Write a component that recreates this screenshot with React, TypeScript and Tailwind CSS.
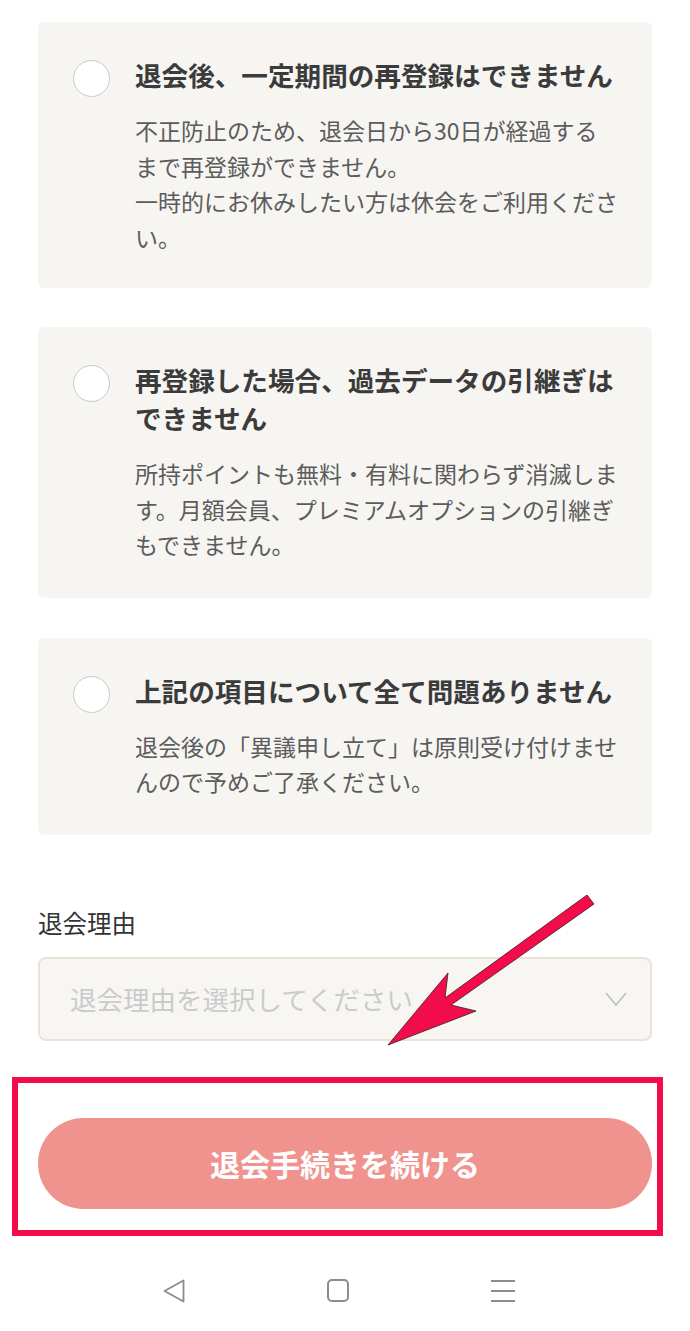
import React from 'react';

const font = { fontFamily: '"Noto Sans CJK JP", "Noto Sans", sans-serif' };

interface NoticeProps {
  title: string;
  body: string[];
  tall?: boolean;
}

const NoticeCard: React.FC<NoticeProps> = ({ title, body, tall }) => (
  <div className={`flex rounded-md bg-[#f6f5f2] pl-[35px] pr-[27px] pt-[34px] ${tall ? 'pb-[35px]' : 'pb-[33px]'}`}>
    <div className="mt-[4px] h-[37px] w-[37px] shrink-0 rounded-full border-[1.5px] border-[#c9c9c9] bg-white" />
    <div className="ml-[25px] flex-1">
      <p className="text-[26.6px] font-bold leading-[38px] text-[#3b3b3b]">{title}</p>
      <p className="mt-[19px] text-[23px] leading-[35.5px] text-[#5c5c5c]">
        {body.map((line, i) => (
          <React.Fragment key={i}>
            {i > 0 && <br />}
            {line}
          </React.Fragment>
        ))}
      </p>
    </div>
  </div>
);

export default function App() {
  return (
    <div className="relative h-[1331px] w-[690px] overflow-hidden bg-white" style={font}>
      <div className="flex flex-col px-[38px] pt-[22px]">
        <NoticeCard
          title="退会後、一定期間の再登録はできません"
          body={[
            '不正防止のため、退会日から30日が経過する',
            'まで再登録ができません。',
            '一時的にお休みしたい方は休会をご利用くださ',
            'い。',
          ]}
        />
        <div className="mt-[39px]">
          <NoticeCard
            tall
            title="再登録した場合、過去データの引継ぎはできません"
            body={[
              '所持ポイントも無料・有料に関わらず消滅しま',
              'す。月額会員、プレミアムオプションの引継ぎ',
              'もできません。',
            ]}
          />
        </div>
        <div className="mt-[40px]">
          <NoticeCard
            tall
            title="上記の項目について全て問題ありません"
            body={['退会後の「異議申し立て」は原則受け付けませ', 'んので予めご了承ください。']}
          />
        </div>

        {/* 退会理由 */}
        <p className="mt-[71px] text-[24.5px] leading-[34px] text-[#333333]">退会理由</p>
        <div className="mt-[17px] flex h-[84px] items-center justify-between rounded-lg border-2 border-[#ebe2d8] bg-[#f7f6f3] pl-[30px] pr-[22px]">
          <span className="text-[26.5px] text-[#cbcbcb]">退会理由を選択してください</span>
          <svg width="24" height="16" viewBox="0 0 24 16" fill="none">
            <path d="M2 2 L12 14 L22 2" stroke="#bdbdbd" strokeWidth="1.6" />
          </svg>
        </div>

        <button className="mt-[77px] flex h-[91px] items-center justify-center rounded-full bg-[#f0938f] text-[30px] font-bold text-white">
          退会手続きを続ける
        </button>
      </div>

      {/* system nav */}
      <div className="ml-[163px] mt-[70px] flex w-[352px] items-center justify-between">
        <svg width="22" height="24" viewBox="0 0 22 24" fill="none">
          <path d="M20.5 1.5 L1.5 12 L20.5 22.5 Z" stroke="#8c8c8c" strokeWidth="1.8" strokeLinejoin="round" />
        </svg>
        <div className="h-[23px] w-[22px] rounded-[5px] border-2 border-[#8c8c8c]" />
        <svg width="24" height="24" viewBox="0 0 24 24" fill="none">
          <path d="M0 2 H24 M0 12 H24 M0 22 H24" stroke="#8c8c8c" strokeWidth="1.8" />
        </svg>
      </div>

      {/* annotation: red frame */}
      <div className="absolute left-[12px] top-[1077px] h-[159px] w-[651px] border-[6px] border-[#f20c4a]" />

      {/* annotation: red arrow */}
      <svg className="absolute left-0 top-0" width="690" height="1331" viewBox="0 0 690 1331">
        <polygon
          points="587,895 594,904 451,1005 476,1011 388,1045 448,973 445,998"
          fill="#f20c4a"
          stroke="#3a1a22"
          strokeWidth="0.8"
          strokeLinejoin="miter"
        />
      </svg>
    </div>
  );
}
